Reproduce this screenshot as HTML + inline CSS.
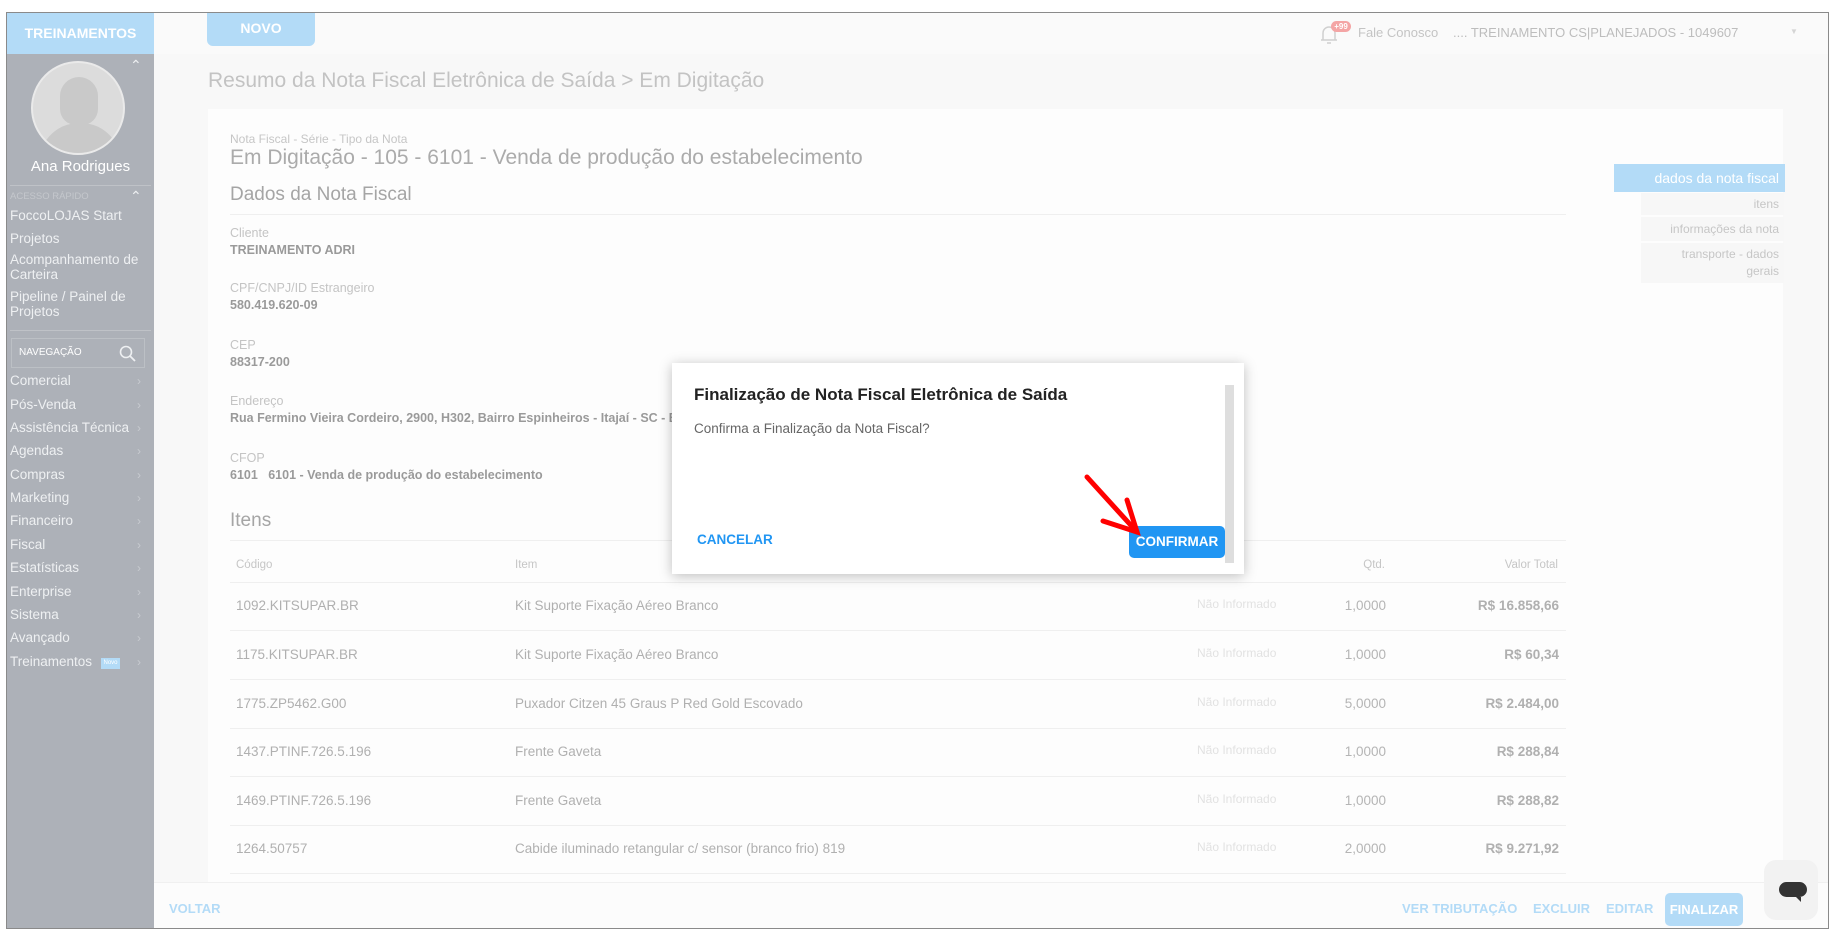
<!DOCTYPE html>
<html><head><meta charset="utf-8"><style>
*{margin:0;padding:0;box-sizing:border-box}
body{width:1837px;height:939px;background:#fff;font-family:"Liberation Sans",sans-serif;position:relative;overflow:hidden}
div{white-space:nowrap}
.a{position:absolute;white-space:nowrap}
#frame{position:absolute;left:6px;top:12px;width:1823px;height:917px;border:1px solid #8a8a8a;background:#f8f8f8;overflow:hidden}
.side{position:absolute;left:0;top:0;width:147px;height:917px;background:#adb1b8}
.sh{position:absolute;left:0;top:0;width:147px;height:41px;background:#b3dbf7;color:#fff;font-weight:bold;font-size:14px;text-align:center;line-height:41px}
.mi{position:absolute;left:3px;color:#eef0f2;font-size:13.5px}
.ch{position:absolute;left:130px;color:#c8cbd0;font-size:12px}
.lbl{position:absolute;left:230px;color:#c4c4c4;font-size:12.5px}
.val{position:absolute;left:230px;color:#9a9a9a;font-size:12.5px;font-weight:bold}
.row{position:absolute;left:230px;width:1336px;height:1px;background:#efefef}
.c1{position:absolute;left:235px;color:#b0b0b0;font-size:13.5px}
.c2{position:absolute;left:514px;color:#b0b0b0;font-size:13.5px}
.c3{position:absolute;left:1196px;color:#e2e2e2;font-size:12px}
.c4{position:absolute;right:442px;color:#b5b5b5;font-size:13.5px}
.c5{position:absolute;right:269px;color:#b0b0b0;font-size:13.5px;font-weight:bold}
.fb{position:absolute;top:888px;color:#b3dbf7;font-size:13px;font-weight:bold}
</style></head><body>
<div id="frame">
  <div style="position:absolute;left:147px;top:0;width:1676px;height:41px;background:#fafafa"></div>
  <div class="side">
    <div class="sh">TREINAMENTOS</div>
    <div style="position:absolute;left:24px;top:48px;width:94px;height:94px;border-radius:50%;background:#dcdcdc;border:2px solid #eaeaea;overflow:hidden">
      <div style="position:absolute;left:27px;top:14px;width:38px;height:48px;border-radius:19px 19px 16px 16px;background:#c9c9c9"></div>
      <div style="position:absolute;left:6px;top:60px;width:82px;height:50px;border-radius:40px 40px 0 0;background:#c9c9c9"></div>
    </div>
    <div class="a" style="left:123px;top:44px;color:#eef0f2;font-size:14px">&#8963;</div>
    <div class="a" style="left:0;width:147px;text-align:center;top:145px;color:#fff;font-size:15px">Ana Rodrigues</div>
    <div style="position:absolute;left:3px;top:172px;width:141px;height:1px;background:#bfc2c7"></div>
    <div class="a" style="left:3px;top:178px;color:#c4c7cc;font-size:9.5px">ACESSO RÁPIDO</div>
    <div class="a" style="left:123px;top:175px;color:#eef0f2;font-size:14px">&#8963;</div>
    <div class="mi" style="top:195px">FoccoLOJAS Start</div>
    <div class="mi" style="top:218px">Projetos</div>
    <div class="mi" style="top:239px;line-height:15px">Acompanhamento de<br>Carteira</div>
    <div class="mi" style="top:276px;line-height:15px">Pipeline / Painel de<br>Projetos</div>
    <div style="position:absolute;left:3px;top:317px;width:141px;height:1px;background:#bfc2c7"></div>
    <div style="position:absolute;left:4px;top:325px;width:134px;height:30px;border:1px solid #bcc0c5"></div>
    <div class="a" style="left:12px;top:334px;color:#fff;font-size:10px">NAVEGAÇÃO</div>
    <svg class="a" style="left:112px;top:332px" width="18" height="18"><circle cx="7" cy="7" r="5.5" fill="none" stroke="#eef0f2" stroke-width="1.6"/><line x1="11" y1="11" x2="16" y2="16" stroke="#eef0f2" stroke-width="1.8"/></svg>
    <div class="mi" style="top:360px">Comercial</div><div class="ch" style="top:361px">&#8250;</div>
    <div class="mi" style="top:384px">Pós-Venda</div><div class="ch" style="top:385px">&#8250;</div>
    <div class="mi" style="top:407px">Assistência Técnica</div><div class="ch" style="top:408px">&#8250;</div>
    <div class="mi" style="top:430px">Agendas</div><div class="ch" style="top:431px">&#8250;</div>
    <div class="mi" style="top:454px">Compras</div><div class="ch" style="top:455px">&#8250;</div>
    <div class="mi" style="top:477px">Marketing</div><div class="ch" style="top:478px">&#8250;</div>
    <div class="mi" style="top:500px">Financeiro</div><div class="ch" style="top:501px">&#8250;</div>
    <div class="mi" style="top:524px">Fiscal</div><div class="ch" style="top:525px">&#8250;</div>
    <div class="mi" style="top:547px">Estatísticas</div><div class="ch" style="top:548px">&#8250;</div>
    <div class="mi" style="top:571px">Enterprise</div><div class="ch" style="top:572px">&#8250;</div>
    <div class="mi" style="top:594px">Sistema</div><div class="ch" style="top:595px">&#8250;</div>
    <div class="mi" style="top:617px">Avançado</div><div class="ch" style="top:618px">&#8250;</div>
    <div class="mi" style="top:641px">Treinamentos</div><div class="a" style="left:94px;top:645px;width:19px;height:11px;background:#b3dbf7;color:#fff;font-size:6px;text-align:center;line-height:11px">Novo</div><div class="ch" style="top:642px">&#8250;</div>
  </div>
  <div class="a" style="left:200px;top:0;width:108px;height:33px;background:#b3dbf7;border-radius:0 0 6px 6px;color:#fff;font-weight:bold;font-size:14px;text-align:center;line-height:30px">NOVO</div>
  <svg class="a" style="left:1312px;top:9px" width="20" height="24"><path d="M4 18 V11 a6 6 0 0 1 12 0 V18 Z M2 18 H18 M8 21 h4" fill="none" stroke="#d0d0d0" stroke-width="1.5"/></svg>
  <div class="a" style="left:1324px;top:8px;width:20px;height:11px;border-radius:6px;background:#f4a5a5;color:#fff;font-size:8px;font-weight:bold;text-align:center;line-height:11px">+99</div>
  <div class="a" style="left:1351px;top:12px;color:#c4c4c4;font-size:13px">Fale Conosco</div>
  <div class="a" style="left:1446px;top:12px;color:#bdbdbd;font-size:13px">.... TREINAMENTO CS|PLANEJADOS - 1049607</div>
  <div class="a" style="left:1783px;top:14px;color:#d5d5d5;font-size:8px">&#9660;</div>
  <div class="a" style="left:201px;top:56px;color:#c3c3c3;font-size:21px">Resumo da Nota Fiscal Eletrônica de Saída &gt; Em Digitação</div>
  <div style="position:absolute;left:201px;top:96px;width:1575px;height:790px;background:#fdfdfd"></div>
  <div class="a" style="left:223px;top:119px;color:#c6c6c6;font-size:12px">Nota Fiscal - Série - Tipo da Nota</div>
  <div class="a" style="left:223px;top:133px;color:#ababab;font-size:21px">Em Digitação - 105 - 6101 - Venda de produção do estabelecimento</div>
  <div class="a" style="left:223px;top:171px;color:#a5a5a5;font-size:19px">Dados da Nota Fiscal</div>
  <div class="row" style="left:223px;top:201px"></div>
  <div class="lbl" style="left:223px;top:213px">Cliente</div><div class="val" style="left:223px;top:230px">TREINAMENTO ADRI</div>
  <div class="lbl" style="left:223px;top:268px">CPF/CNPJ/ID Estrangeiro</div><div class="val" style="left:223px;top:285px">580.419.620-09</div>
  <div class="lbl" style="left:223px;top:325px">CEP</div><div class="val" style="left:223px;top:342px">88317-200</div>
  <div class="lbl" style="left:223px;top:381px">Endereço</div><div class="val" style="left:223px;top:398px">Rua Fermino Vieira Cordeiro, 2900, H302, Bairro Espinheiros - Itajaí - SC - B</div>
  <div class="lbl" style="left:223px;top:438px">CFOP</div><div class="val" style="left:223px;top:455px">6101&nbsp;&nbsp; 6101 - Venda de produção do estabelecimento</div>
  <div class="a" style="left:223px;top:497px;color:#a5a5a5;font-size:19px">Itens</div>
  <div class="row" style="left:223px;top:527px"></div>
  <div class="a" style="left:229px;top:546px;color:#c6c6c6;font-size:11.5px">Código</div>
  <div class="a" style="left:508px;top:546px;color:#c6c6c6;font-size:11.5px">Item</div>
  <div class="a" style="right:443px;top:546px;color:#c6c6c6;font-size:11.5px">Qtd.</div>
  <div class="a" style="right:270px;top:546px;color:#c6c6c6;font-size:11.5px">Valor Total</div>
  <div class="row" style="left:223px;top:569px"></div>
  <div class="c1" style="left:229px;top:585px">1092.KITSUPAR.BR</div><div class="c2" style="left:508px;top:585px">Kit Suporte Fixação Aéreo Branco</div><div class="c3" style="left:1190px;top:584px">Não Informado</div><div class="c4" style="top:585px">1,0000</div><div class="c5" style="top:585px">R$ 16.858,66</div>
  <div class="row" style="left:223px;top:617px"></div>
  <div class="c1" style="left:229px;top:634px">1175.KITSUPAR.BR</div><div class="c2" style="left:508px;top:634px">Kit Suporte Fixação Aéreo Branco</div><div class="c3" style="left:1190px;top:633px">Não Informado</div><div class="c4" style="top:634px">1,0000</div><div class="c5" style="top:634px">R$ 60,34</div>
  <div class="row" style="left:223px;top:666px"></div>
  <div class="c1" style="left:229px;top:683px">1775.ZP5462.G00</div><div class="c2" style="left:508px;top:683px">Puxador Citzen 45 Graus P Red Gold Escovado</div><div class="c3" style="left:1190px;top:682px">Não Informado</div><div class="c4" style="top:683px">5,0000</div><div class="c5" style="top:683px">R$ 2.484,00</div>
  <div class="row" style="left:223px;top:715px"></div>
  <div class="c1" style="left:229px;top:731px">1437.PTINF.726.5.196</div><div class="c2" style="left:508px;top:731px">Frente Gaveta</div><div class="c3" style="left:1190px;top:730px">Não Informado</div><div class="c4" style="top:731px">1,0000</div><div class="c5" style="top:731px">R$ 288,84</div>
  <div class="row" style="left:223px;top:763px"></div>
  <div class="c1" style="left:229px;top:780px">1469.PTINF.726.5.196</div><div class="c2" style="left:508px;top:780px">Frente Gaveta</div><div class="c3" style="left:1190px;top:779px">Não Informado</div><div class="c4" style="top:780px">1,0000</div><div class="c5" style="top:780px">R$ 288,82</div>
  <div class="row" style="left:223px;top:812px"></div>
  <div class="c1" style="left:229px;top:828px">1264.50757</div><div class="c2" style="left:508px;top:828px">Cabide iluminado retangular c/ sensor (branco frio) 819</div><div class="c3" style="left:1190px;top:827px">Não Informado</div><div class="c4" style="top:828px">2,0000</div><div class="c5" style="top:828px">R$ 9.271,92</div>
  <div class="row" style="left:223px;top:860px"></div>
  <div class="a" style="left:1607px;top:151px;width:171px;height:28px;background:#b3dbf7;color:#fff;font-size:14px;text-align:right;padding-right:6px;line-height:28px">dados da nota fiscal</div>
  <div class="a" style="left:1634px;top:180px;width:143px;height:22px;background:#f7f7f7;color:#c6c6c6;font-size:12px;text-align:right;padding-right:5px;line-height:22px">itens</div>
  <div class="a" style="left:1634px;top:204px;width:143px;height:24px;background:#f7f7f7;color:#c6c6c6;font-size:12px;text-align:right;padding-right:5px;line-height:24px">informações da nota</div>
  <div class="a" style="left:1634px;top:230px;width:143px;height:40px;background:#f7f7f7;color:#c6c6c6;font-size:12px;text-align:right;padding-right:5px;line-height:17px;padding-top:3px">transporte - dados<br>gerais</div>
  <div style="position:absolute;left:147px;top:869px;width:1676px;height:48px;background:#fcfcfc;border-top:1px solid #f0f0f0"></div>
  <div class="fb" style="left:162px">VOLTAR</div>
  <div class="fb" style="left:1395px">VER TRIBUTAÇÃO</div>
  <div class="fb" style="left:1526px">EXCLUIR</div>
  <div class="fb" style="left:1599px">EDITAR</div>
  <div class="a" style="left:1658px;top:880px;width:78px;height:33px;border-radius:5px;background:#b3dbf7;color:#fff;font-size:13px;font-weight:bold;text-align:center;line-height:33px">FINALIZAR</div>
  <div class="a" style="left:1757px;top:847px;width:54px;height:60px;border-radius:12px;background:#f2f2f2"></div>
  <div class="a" style="left:1772px;top:869px;width:28px;height:15px;border-radius:8px;background:#333"></div>
  <div class="a" style="left:1789px;top:884px;width:0;height:0;border-top:5px solid #333;border-left:5px solid transparent"></div>
</div>
<div class="a" style="left:672px;top:363px;width:572px;height:211px;background:#fff;box-shadow:0 2px 12px rgba(0,0,0,0.25)"></div>
<div class="a" style="left:1225px;top:385px;width:9px;height:178px;background:#dedede"></div>
<div class="a" style="left:694px;top:385px;color:#222;font-size:17px;font-weight:bold">Finalização de Nota Fiscal Eletrônica de Saída</div>
<div class="a" style="left:694px;top:421px;color:#666;font-size:13.5px">Confirma a Finalização da Nota Fiscal?</div>
<div class="a" style="left:697px;top:532px;color:#2196f3;font-size:13.5px;font-weight:bold">CANCELAR</div>
<div class="a" style="left:1129px;top:526px;width:96px;height:32px;border-radius:5px;background:#2196f3;color:#fff;font-size:13.5px;font-weight:bold;text-align:center;line-height:32px">CONFIRMAR</div>
<svg class="a" style="left:1075px;top:465px" width="80" height="80"><g stroke="#f00" stroke-width="5" stroke-linecap="round" fill="none"><path d="M12 12 L62 67"/><path d="M52 35 L62 67 L28 56"/></g></svg>
</body></html>
